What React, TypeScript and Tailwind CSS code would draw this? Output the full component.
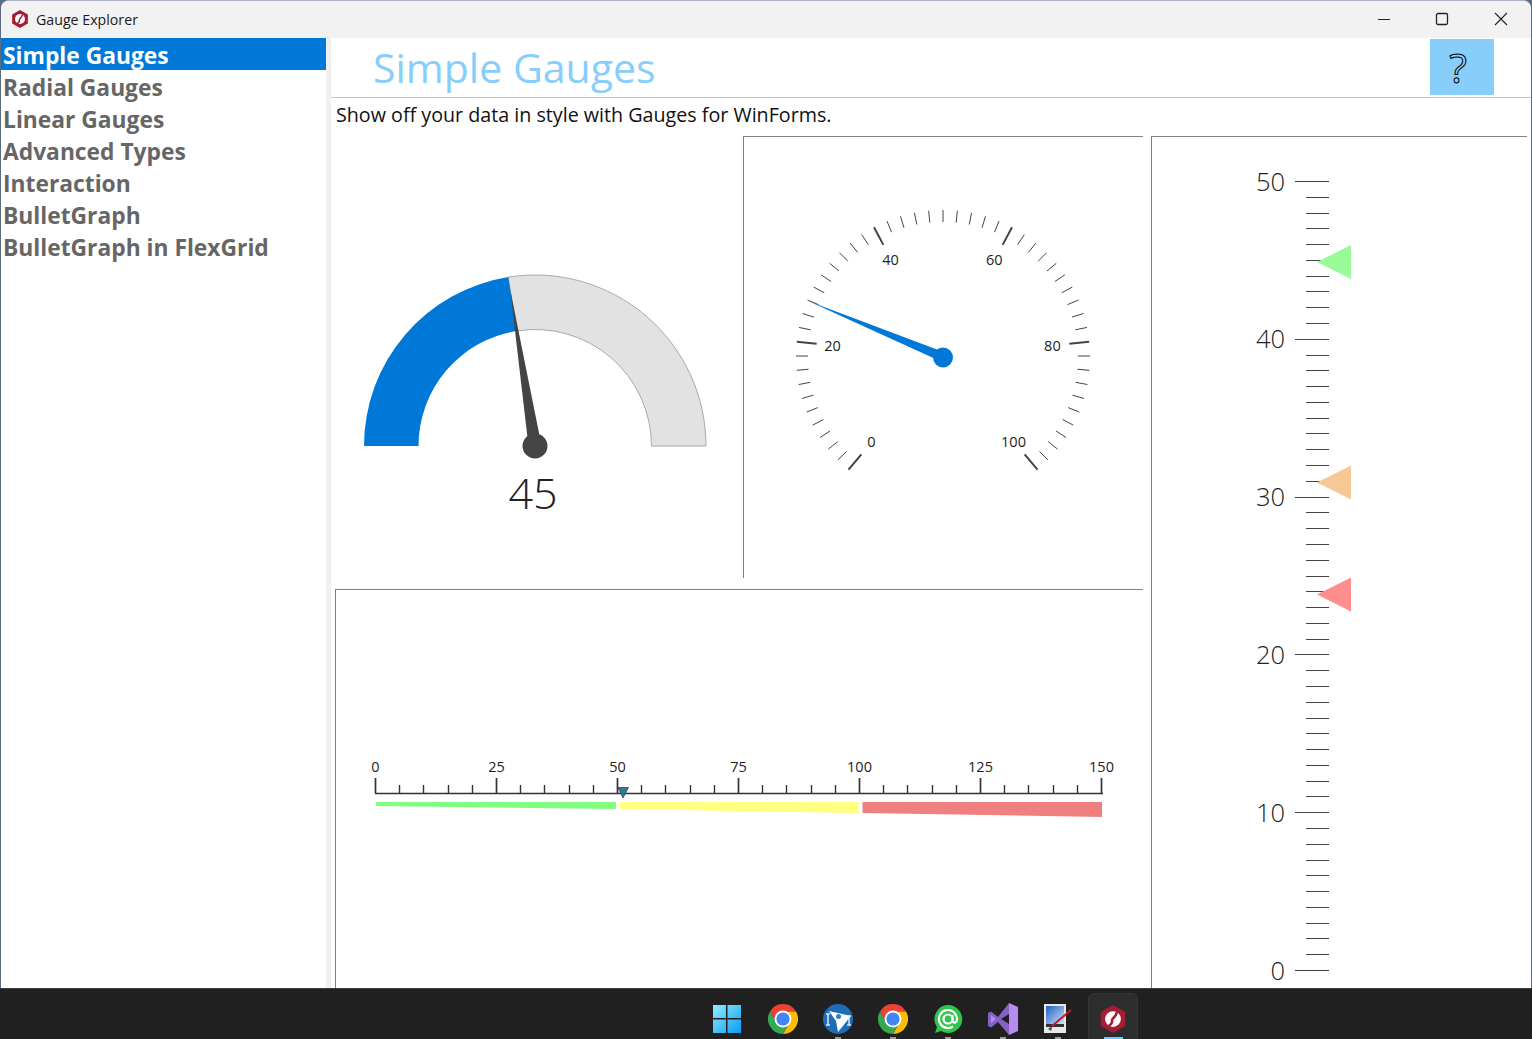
const FONT = "font-['Open_Sans','Noto_Sans',sans-serif]"

const navItems = ['Simple Gauges', 'Radial Gauges', 'Linear Gauges', 'Advanced Types', 'Interaction', 'BulletGraph', 'BulletGraph in FlexGrid']

function polar(cx: number, cy: number, r: number, deg: number) {
  // deg is measured clockwise from straight up
  const a = (deg * Math.PI) / 180
  return { x: cx + r * Math.sin(a), y: cy - r * Math.cos(a) }
}

function Logo({ size }: { size: number }) {
  return (
    <svg width={size} height={size} viewBox="0 0 32 32">
      <path d="M16 0 L30 8 V24 L16 32 L2 24 V8 Z" fill="#a51d34" />
      <circle cx="16" cy="16" r="9" fill="#fff" />
      <path d="M20 8 C21 13 14 15 15 18 C15.500 20 13 23 11 24" fill="none" stroke="#a51d34" strokeWidth="3" />
    </svg>
  )
}

function WinControls() {
  return (
    <div className="flex items-center">
      <svg width="14" height="14" viewBox="0 0 14 14" className="mr-[44px] -mt-0.5">
        <path d="M1 7.5H13" stroke="#222" strokeWidth="1" />
      </svg>
      <svg width="14" height="14" viewBox="0 0 14 14" className="mr-[45px] -mt-0.5">
        <rect x="1.500" y="1.500" width="11" height="11" rx="1.500" fill="none" stroke="#222" strokeWidth="1.300" />
      </svg>
      <svg width="14" height="14" viewBox="0 0 14 14" className="mr-[23px] -mt-0.5">
        <path d="M1 1L13 13M13 1L1 13" stroke="#222" strokeWidth="1.100" />
      </svg>
    </div>
  )
}

function ArcGauge() {
  const cx = 535
  const cy = 446
  const R = 171
  const r = 116.5
  const deg = -90 + 0.45 * 180
  const o = polar(cx, cy, R, deg)
  const i = polar(cx, cy, r, deg)
  const tip = polar(cx, cy, 158, deg)
  const b1 = polar(cx, cy, 6.5, deg + 90)
  const b2 = polar(cx, cy, 6.5, deg - 90)
  return (
    <svg width="412" height="453" viewBox="331 136 412 453" className="block">
      <path d={`M${cx + R} ${cy} A${R} ${R} 0 0 0 ${o.x} ${o.y} L${i.x} ${i.y} A${r} ${r} 0 0 1 ${cx + r} ${cy} Z`} fill="#e2e2e2" stroke="#a9a9a9" strokeWidth="1" />
      <path d={`M${cx - R} ${cy} A${R} ${R} 0 0 1 ${o.x} ${o.y} L${i.x} ${i.y} A${r} ${r} 0 0 0 ${cx - r} ${cy} Z`} fill="#0078d7" />
      <path d={`M${tip.x} ${tip.y} L${b1.x} ${b1.y} L${b2.x} ${b2.y} Z`} fill="#444" />
      <circle cx={cx} cy={cy} r="12.5" fill="#444" />
      <text x="533" y="509" textAnchor="middle" fontSize="43" fontWeight="300" fill="#222">45</text>
    </svg>
  )
}

function RadialGauge() {
  const cx = 943
  const cy = 357
  const toDeg = (v: number) => -140 + v * 2.8
  const ticks = Array.from({ length: 51 }, (_, n) => n * 2)
  const labels = [0, 20, 40, 60, 80, 100]
  const pv = 25.9
  const tip = polar(cx, cy, 146, toDeg(pv))
  const b1 = polar(cx, cy, 5, toDeg(pv) + 90)
  const b2 = polar(cx, cy, 5, toDeg(pv) - 90)
  return (
    <svg width="399" height="441" viewBox="744 137 399 441" className="block">
      {ticks.map(v => {
        const major = v % 20 === 0
        const a = polar(cx, cy, 147, toDeg(v))
        const b = polar(cx, cy, major ? 127 : 135, toDeg(v))
        return <line key={v} x1={a.x} y1={a.y} x2={b.x} y2={b.y} stroke="#444" strokeWidth={major ? 2 : 1} />
      })}
      {labels.map(v => {
        const p = polar(cx, cy, 110.5, toDeg(v))
        return <text key={v} x={p.x - 0.5} y={p.y + 5.5} textAnchor="middle" fontSize="14.5" fill="#222">{v}</text>
      })}
      <path d={`M${tip.x} ${tip.y} L${b1.x} ${b1.y} L${b2.x} ${b2.y} Z`} fill="#0078d7" />
      <circle cx={cx} cy={cy + 0.5} r="10" fill="#0078d7" />
    </svg>
  )
}

function BulletGauge() {
  const x0 = 376
  const step = (1102 - 376) / 150
  const ticks = Array.from({ length: 31 }, (_, n) => n * 5)
  return (
    <svg width="807" height="398" viewBox="336 590 807 398" className="block">
      <line x1={x0 - 1} y1="793.500" x2="1103" y2="793.500" stroke="#333" strokeWidth="1.700" />
      {ticks.map(v => {
        const major = v % 25 === 0
        const x = Math.round(x0 + v * step) - 0.5
        return <line key={v} x1={x} y1={major ? 778 : 785} x2={x} y2="793" stroke="#333" strokeWidth={major ? 1.700 : 1.400} />
      })}
      {[0, 25, 50, 75, 100, 125, 150].map(v => (
        <text key={v} x={x0 + v * step - 0.5} y="771.500" textAnchor="middle" fontSize="14.5" fill="#222">{v}</text>
      ))}
      <polygon points="376,802 616,802 616,809 376,806" fill="#80ff80" />
      <polygon points="620,802 858.500,802 858.500,813 620,809" fill="#ffff80" />
      <polygon points="862.500,802 1102,802 1102,817 862.500,813" fill="#f08080" />
      <polygon points="618,787.500 628.500,787.500 623,798" fill="#2c7a9c" stroke="#222" strokeWidth="0.600" />
    </svg>
  )
}

function LinearGauge() {
  const y = (v: number) => 970 - v * 15.78
  const ticks = Array.from({ length: 51 }, (_, n) => n)
  const marks = [
    { cy: 262, fill: '#98fb98' },
    { cy: 482.5, fill: '#f6c896' },
    { cy: 594.5, fill: '#ff8f8f' },
  ]
  return (
    <svg width="375" height="851" viewBox="1152 137 375 851" className="block">
      {ticks.map(v => {
        const major = v % 10 === 0
        const ty = Math.round(y(v)) + 0.5
        return <line key={v} x1={major ? 1295 : 1306} y1={ty} x2="1329" y2={ty} stroke="#444" strokeWidth="1" />
      })}
      {[0, 10, 20, 30, 40, 50].map(v => (
        <text key={v} x="1285" y={y(v) + 9.5} textAnchor="end" fontSize="25.5" fontWeight="300" fill="#222">{v}</text>
      ))}
      {marks.map(m => (
        <polygon key={m.cy} points={`1317,${m.cy} 1351,${m.cy - 17} 1351,${m.cy + 17}`} fill={m.fill} />
      ))}
    </svg>
  )
}

function WindowsIcon() {
  return (
    <svg width="30" height="30" viewBox="0 0 30 30" className="-ml-0.5">
      <defs>
        <linearGradient id="win" x1="0" y1="0" x2="1" y2="1">
          <stop offset="0" stopColor="#93ecff" />
          <stop offset="1" stopColor="#0a9bf5" />
        </linearGradient>
      </defs>
      <path d="M1 1H14V14H1ZM15.500 1H29V14H15.500ZM1 15.500H14V29H1ZM15.500 15.500H29V29H15.500Z" fill="url(#win)" />
    </svg>
  )
}

function ChromeIcon() {
  return (
    <svg width="30" height="30" viewBox="0 0 48 48">
      <path d="M3.200 12 A24 24 0 0 1 44.800 12 H24 A12 12 0 0 0 13.600 30 Z" fill="#ea4335" />
      <path d="M44.800 12 A24 24 0 0 1 24 48 L34.400 30 A12 12 0 0 0 24 12 Z" fill="#fbbc04" />
      <path d="M24 48 A24 24 0 0 1 3.200 12 L13.600 30 A12 12 0 0 0 34.400 30 Z" fill="#34a853" />
      <circle cx="24" cy="24" r="13.500" fill="#fff" />
      <circle cx="24" cy="24" r="10.500" fill="#4285f4" />
    </svg>
  )
}

function PlaneIcon() {
  return (
    <svg width="30" height="30" viewBox="0 0 30 30">
      <circle cx="15" cy="15" r="15" fill="#1f6db8" />
      <path d="M3 10H7M5 10V21M3 21H7M24 12H28M26 12V21M24 21H28" stroke="#d8e8f6" strokeWidth="1.500" fill="none" />
      <path d="M6 7 L28 12 L15 28 L13 17 Z" fill="#fff" />
      <circle cx="15.500" cy="12.500" r="2.500" fill="#2f7fc4" />
    </svg>
  )
}

function AtIcon() {
  return (
    <svg width="30" height="30" viewBox="0 0 30 30">
      <path d="M15 1 A14 14 0 1 1 8 27 L2 29 L4 23 A14 14 0 0 1 15 1 Z" fill="#2fc44a" />
      <circle cx="15" cy="15" r="4.500" fill="none" stroke="#fff" strokeWidth="2.200" />
      <path d="M19.500 11 V16.500 C19.500 19.500 24 19.500 24 15 A9 9 0 1 0 20 22.500" fill="none" stroke="#fff" strokeWidth="2.200" />
    </svg>
  )
}

function StudioIcon() {
  return (
    <svg width="30" height="32" viewBox="0 0 30 32" className="-mt-px">
      <path d="M21 0 L30 4 V28 L21 32 Z" fill="#b78cf0" />
      <path d="M0 10 L3 8.500 L10 14 L21 0 V11 L13 16 L21 21 V32 L10 19 L3 24.500 L0 23 Z" fill="#8661c5" />
      <path d="M3 12 L8 16 L3 20 Z" fill="#b78cf0" />
    </svg>
  )
}

function PaintIcon() {
  return (
    <svg width="30" height="30" viewBox="0 0 30 30">
      <rect x="1" y="0" width="22" height="29" fill="#e8e8e8" />
      <defs>
        <linearGradient id="sky" x1="0" y1="0" x2="1" y2="1">
          <stop offset="0" stopColor="#1f5fc4" />
          <stop offset="1" stopColor="#cfe3f7" />
        </linearGradient>
      </defs>
      <rect x="3" y="2" width="18" height="18" fill="url(#sky)" />
      <rect x="3" y="20" width="18" height="3" fill="#333" />
      <path d="M28 6 L9 22" stroke="#c8192c" strokeWidth="2" />
      <path d="M10 21 L5 25 L8 27 Z" fill="#555" />
    </svg>
  )
}

const taskbarIcons = [
  { key: 'start', icon: <WindowsIcon /> },
  { key: 'chrome', icon: <ChromeIcon /> },
  { key: 'plane', icon: <PlaneIcon />, dot: true },
  { key: 'chrome2', icon: <ChromeIcon />, dot: true },
  { key: 'at', icon: <AtIcon />, dot: true },
  { key: 'studio', icon: <StudioIcon />, dot: true },
  { key: 'paint', icon: <PaintIcon />, dot: true },
  { key: 'gauge', icon: <Logo size={28} />, active: true },
]

export default function App() {
  return (
    <div className={`h-screen flex flex-col bg-[#5b6b85] overflow-hidden ${FONT}`}>
      {/* Window */}
      <div className="flex-1 min-h-0 flex flex-col mx-px bg-white rounded-t-lg border-t border-[#a9b0c4] overflow-hidden">
        <div className="h-[37px] shrink-0 bg-[#f2f2f2] flex items-center justify-between">
          <div className="flex items-center pl-[10px] gap-[7px]">
            <Logo size={18} />
            <span className="text-[14.2px] text-[#1a1a1a]">Gauge Explorer</span>
          </div>
          <WinControls />
        </div>

        <div className="flex-1 min-h-0 flex">
          {/* Sidebar */}
          <div className="w-[325px] shrink-0">
            {navItems.map((item, i) => (
              <div
                key={item}
                className={`h-8 pl-[2px] pt-1 flex items-center text-[22.8px] font-bold whitespace-nowrap ${i === 0 ? 'bg-[#0078d7] text-white' : 'text-[#666666]'}`}
              >
                {item}
              </div>
            ))}
          </div>
          <div className="w-[5px] shrink-0 bg-[#f0f0f0]" />

          {/* Main */}
          <div className="flex-1 min-w-0 flex flex-col">
            <div className="h-[60px] shrink-0 flex justify-between pl-[42px] pr-[37px] border-b border-[#a9cfe4]">
              <span className="text-[41px] leading-[58px] text-[#87cefa]">Simple Gauges</span>
              <div className="mt-px w-16 h-14 bg-[#87cefa] flex items-center justify-center">
                <span className="text-[41px] leading-none text-transparent [-webkit-text-stroke:1px_#000] -ml-2">?</span>
              </div>
            </div>
            <div className="h-[38px] shrink-0 pl-[5px] pb-1 flex items-center text-[19.7px] text-[#111]">
              Show off your data in style with Gauges for WinForms.
            </div>
            <div className="flex-1 min-h-0 flex gap-2 pr-1">
              <div className="w-[812px] shrink-0 flex flex-col">
                <div className="h-[453px] shrink-0 flex items-start">
                  <ArcGauge />
                  <div className="border-t border-l border-[#808080]">
                    <RadialGauge />
                  </div>
                </div>
                <div className="ml-1 flex-1 min-h-0 border-t border-l border-[#808080]">
                  <BulletGauge />
                </div>
              </div>
              <div className="flex-1 min-w-0 border-t border-l border-[#808080]">
                <LinearGauge />
              </div>
            </div>
          </div>
        </div>
      </div>

      {/* Taskbar */}
      <div className="h-[51px] shrink-0 bg-[#202020] border-t border-[#3c3c3c] flex pl-[700px]">
        {taskbarIcons.map(t => (
          <div key={t.key} className="w-[55px] flex justify-center">
            <div className={`relative w-[50px] mt-1 rounded-t-md flex justify-center pt-[11px] ${t.active ? 'bg-[#2d2d2d] border border-b-0 border-[#363636]' : ''}`}>
              {t.icon}
              {t.dot && <span className="absolute bottom-0 left-[22px] w-[6px] h-[2px] bg-[#9a9a9a]" />}
              {t.active && <span className="absolute bottom-0 left-[15px] w-[19px] h-[2px] bg-[#60cdff]" />}
            </div>
          </div>
        ))}
      </div>
    </div>
  )
}
